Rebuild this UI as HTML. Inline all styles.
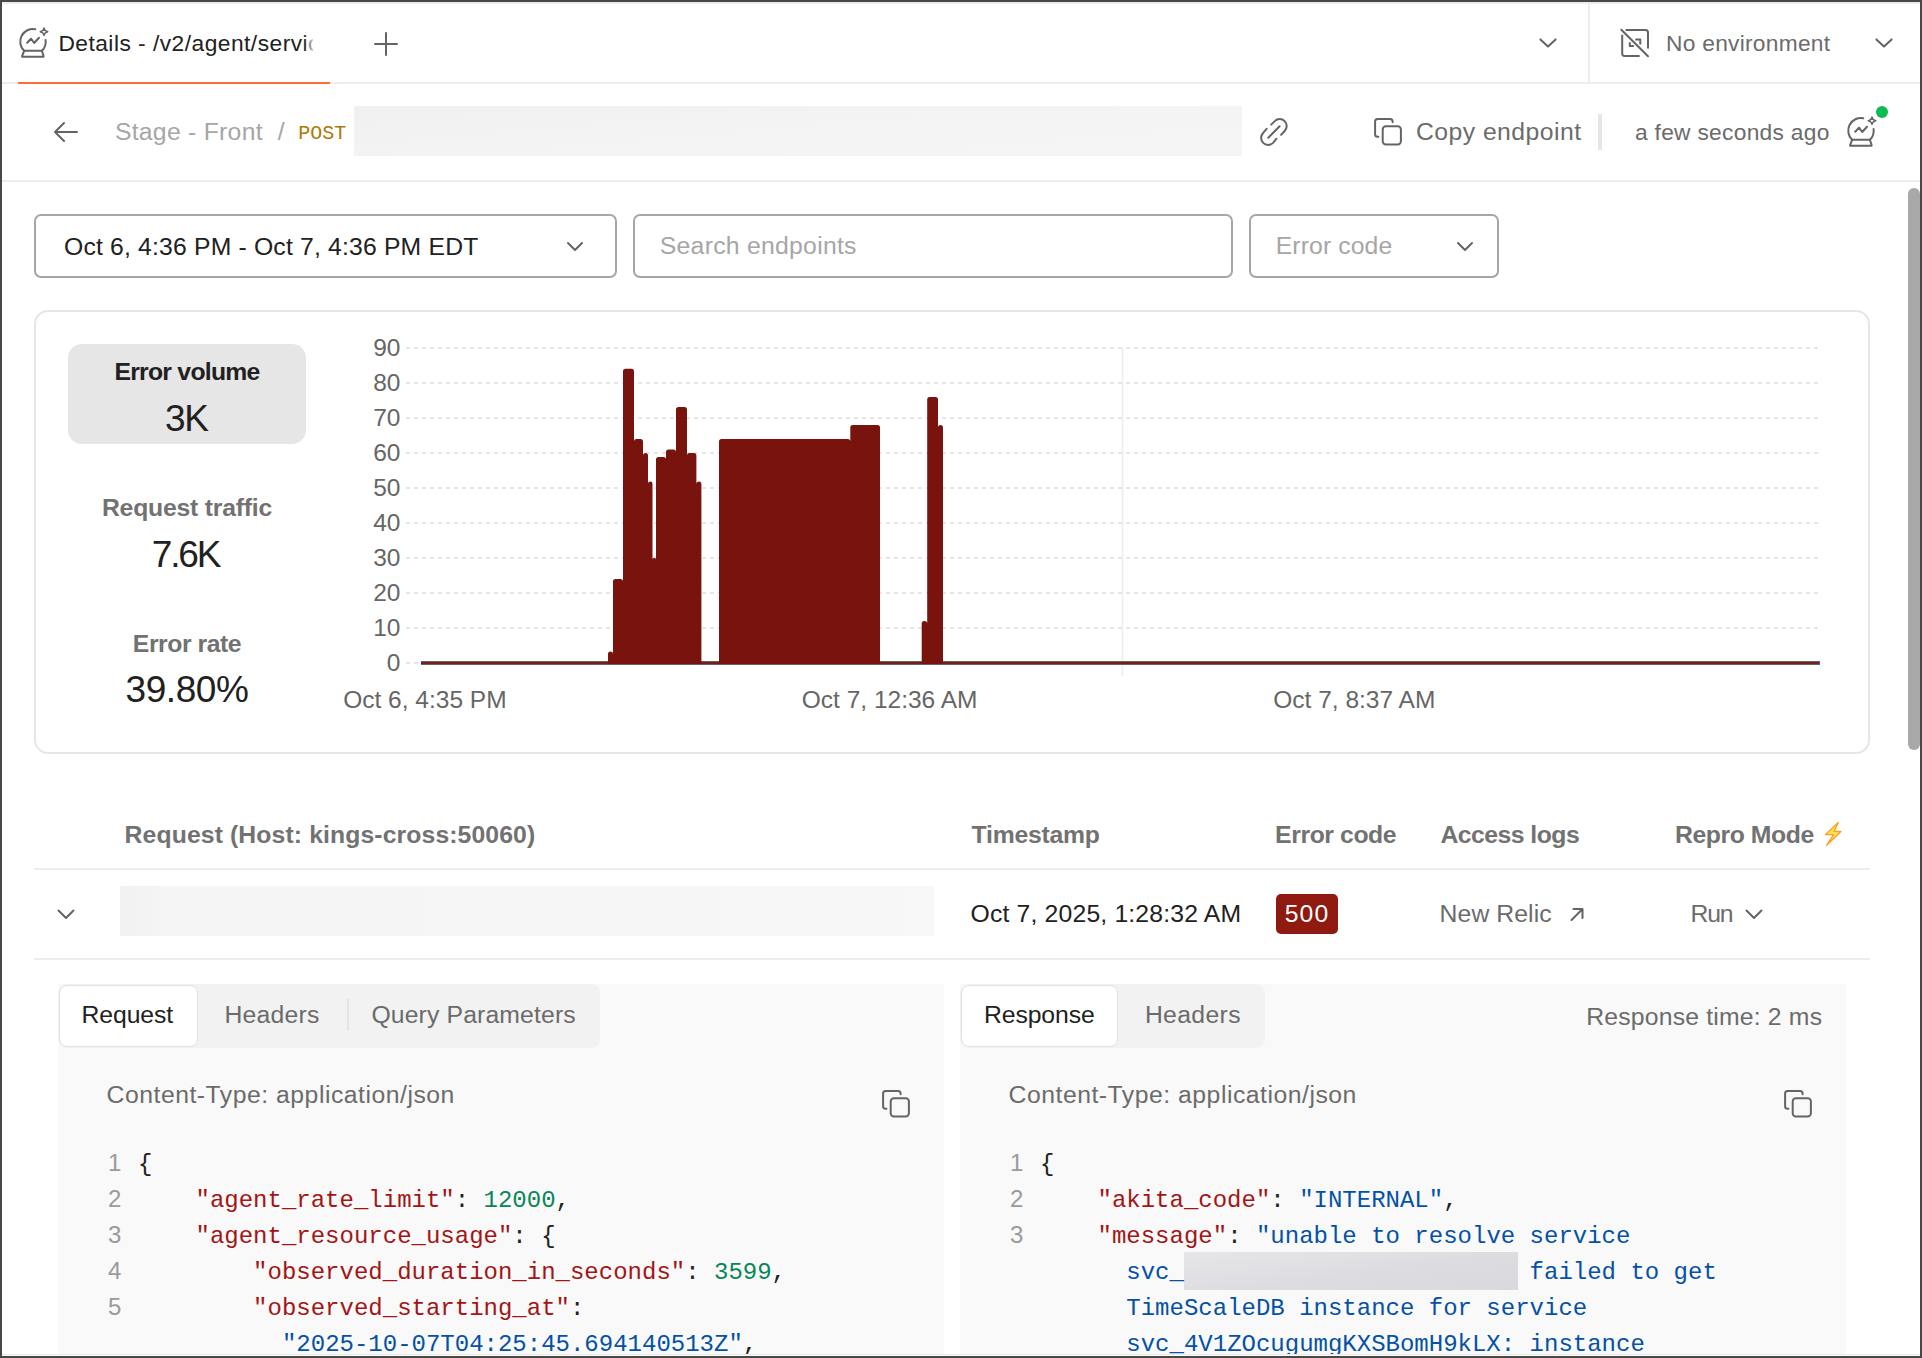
<!DOCTYPE html>
<html lang="en">
<head>
<meta charset="utf-8">
<title>Details - /v2/agent/service</title>
<style>
*{box-sizing:border-box;margin:0;padding:0}
html,body{width:1922px;height:1358px;overflow:hidden;background:#fff}
body{position:relative;font-family:"Liberation Sans",Arial,sans-serif;color:#212121}
.a{position:absolute}
.t{position:absolute;white-space:nowrap;line-height:40px;height:40px;font-size:24.75px}
.m{font-family:"Liberation Mono","DejaVu Sans Mono",monospace}
.g{color:#6b6b6b}
.lg{color:#a6a6a6}
.b{font-weight:bold}
.b.g{color:#727272}
.hl{position:absolute;background:#ededed;height:2px}
svg{position:absolute;overflow:visible}
.ic{fill:none;stroke:#646464;stroke-width:2;stroke-linecap:round;stroke-linejoin:round}
.box{position:absolute;border:2px solid #a6a6a6;border-radius:7px;background:#fff}
.ctr{text-align:center}
/* code */
.ln{position:absolute;white-space:pre;font-family:"Liberation Mono","DejaVu Sans Mono",monospace;font-size:24px;line-height:36px;height:36px}
.k{color:#a31515}.n{color:#098658}.s{color:#0451a5}.p{color:#212121}.num{color:#9a9a9a;font-family:"Liberation Sans",Arial,sans-serif;width:14.4px;text-align:center;margin-left:-0.4px;margin-top:-2px}
</style>
</head>
<body>
<!-- window frame -->
<div class="a" style="left:0;top:0;width:1922px;height:1358px;border:2px solid #484848;z-index:50;pointer-events:none"></div>

<div class="a" style="left:2px;top:1354px;width:1918px;height:1px;background:#ebebeb;z-index:40"></div>
<div class="a" style="left:2px;top:1355px;width:1918px;height:1px;background:#fdfdfd;z-index:40"></div>
<!-- ===== tab bar ===== -->
<div class="hl" style="left:2px;top:2px;width:1918px;background:#ececec"></div>
<div class="hl" style="left:2px;top:82px;width:1918px"></div>
<div class="a" style="left:18px;top:82px;width:312px;height:2px;background:#ff6c37"></div>
<div class="a" style="left:1588px;top:4px;width:2px;height:78px;background:#ededed"></div>
<svg id="tabicon" style="left:16px;top:24px" width="36" height="36" viewBox="16 24 36 36"><g class="ic">
<path d="M35.3 29.2A12.7 12.7 0 0 0 24.1 50.8H41.9A12.7 12.7 0 0 0 45.6 40.1"/>
<path d="M24.1 50.8L22.1 56.1Q21.9 56.7 22.6 56.7H43.1Q43.8 56.7 43.6 56.1L41.9 50.8"/>
<path d="M27.2 42.7L31 38.7L34.2 43L39 37.8"/>
<path d="M44 27.9Q44.5 31.2 47.8 31.7Q44.5 32.2 44 35.5Q43.5 32.2 40.2 31.7Q43.5 31.2 44 27.9Z" style="stroke-width:1.4"/>
</g></svg>
<div class="t" id="tabtitle" style="left:58.4px;top:22.9px;width:254.8px;overflow:hidden;font-size:22.75px;letter-spacing:.48px">Details - /v2/agent/service</div>
<div class="a" style="left:304px;top:24px;width:10px;height:40px;background:linear-gradient(90deg,rgba(255,255,255,0),rgba(255,255,255,.85))"></div>
<svg style="left:373px;top:31px" width="26" height="26" viewBox="0 0 26 26"><path class="ic" d="M13 2V24M2 13H24"/></svg>
<svg style="left:1538px;top:37px" width="20" height="12" viewBox="0 0 20 12"><path class="ic" d="M2.4 2.4L10 9.6L17.6 2.4"/></svg>
<svg id="envicon" style="left:1616px;top:24px" width="38" height="38" viewBox="1616 24 38 38"><g class="ic" style="stroke-linecap:butt">
<path d="M1625.6 30H1645.5Q1648 30 1648 32.5V48.6"/>
<path d="M1622.2 34.7V53.4Q1622.2 55.9 1624.7 55.9H1639.7"/>
<path d="M1635.3 39.6H1640.3V44.5M1629.8 42.2V46.1H1633.8"/>
<path d="M1621.3 29.7L1648 56.3" style="stroke-linecap:round"/>
</g></svg>
<div class="t g" id="noenv" style="left:1666.0px;top:23.1px;font-size:22.75px;letter-spacing:0.27px">No environment</div>
<svg style="left:1874px;top:37px" width="20" height="12" viewBox="0 0 20 12"><path class="ic" d="M2.4 2.4L10 9.6L17.6 2.4"/></svg>

<!-- ===== breadcrumb bar ===== -->
<div class="hl" style="left:2px;top:180px;width:1918px"></div>
<svg style="left:53px;top:121px" width="26" height="22" viewBox="0 0 26 22"><path class="ic" d="M24 11H2M11 2L2 11L11 20"/></svg>
<div class="t lg" id="stage" style="left:114.9px;top:112.1px;font-size:24.75px;letter-spacing:0.27px">Stage - Front</div>
<div class="t lg" id="slash" style="left:277.8px;top:112.3px;font-size:24.75px">/</div>
<div class="t m" id="post" style="left:298.2px;top:113.7px;font-size:20px;color:#ad7a03;letter-spacing:0.00px">POST</div>
<div class="a" style="left:354px;top:106px;width:888px;height:50px;background:linear-gradient(175deg,#f0f0f0,#f4f4f4 55%,#f5f5f5)"></div>
<svg id="linkicon" style="left:1256px;top:114px" width="36" height="36" viewBox="1256 114 36 36"><g class="ic" stroke-width="2.1">
<path d="M1271.2 124.6L1274.75 121.15A7 7 0 0 1 1284.65 131.05L1281.1 134.85"/>
<path d="M1266.6 128.85L1263.15 132.95A7 7 0 0 0 1273.05 142.85L1276.5 138.7"/>
<path d="M1268.3 137.7L1279.6 126.2"/>
</g></svg>
<svg id="copy1" style="left:1374px;top:118.2px" width="28" height="28" viewBox="0 0 28 28"><g class="ic" stroke-width="2.1"><rect x="8.7" y="8.3" width="18.2" height="18.2" rx="3.2"/><path d="M18.6 4.2V3.6Q18.6 1.1 16.1 1.1H3.6Q1.1 1.1 1.1 3.6V16.3Q1.1 18.8 3.6 18.8H4.4"/></g></svg>
<div class="t g" id="copyep" style="left:1416.0px;top:112.1px;font-size:24.75px;letter-spacing:0.45px">Copy endpoint</div>
<div class="a" style="left:1598px;top:114px;width:4px;height:36px;background:#e6e6e6"></div>
<div class="t g" id="ago" style="left:1635.0px;top:111.8px;font-size:22.75px;letter-spacing:0.29px">a few seconds ago</div>
<svg id="ballicon" style="left:1843.9px;top:112.9px" width="36" height="36" viewBox="16 24 36 36"><g class="ic">
<path d="M35.3 29.2A12.7 12.7 0 0 0 24.1 50.8H41.9A12.7 12.7 0 0 0 45.6 40.1"/>
<path d="M24.1 50.8L22.1 56.1Q21.9 56.7 22.6 56.7H43.1Q43.8 56.7 43.6 56.1L41.9 50.8"/>
<path d="M27.2 42.7L31 38.7L34.2 43L39 37.8"/>
<path d="M44 27.9Q44.5 31.2 47.8 31.7Q44.5 32.2 44 35.5Q43.5 32.2 40.2 31.7Q43.5 31.2 44 27.9Z" style="stroke-width:1.4"/>
</g></svg>
<div class="a" style="left:1876px;top:106px;width:12px;height:12px;border-radius:6px;background:#0cbb52"></div>

<!-- scrollbar -->
<div class="a" style="left:1908px;top:188px;width:12px;height:562px;border-radius:6px;background:#a8a8a8"></div>

<!-- ===== filter row ===== -->
<div class="box" style="left:34px;top:214px;width:583px;height:64px"></div>
<div class="t" id="daterange" style="left:64.0px;top:227.1px;font-size:24.75px;letter-spacing:0.17px">Oct 6, 4:36 PM - Oct 7, 4:36 PM EDT</div>
<svg style="left:566px;top:241px" width="18" height="11" viewBox="0 0 18 11"><path class="ic" d="M2 2L9 9L16 2"/></svg>
<div class="box" style="left:633px;top:214px;width:600px;height:64px"></div>
<div class="t lg" id="search" style="left:659.8px;top:225.9px;font-size:24.75px;letter-spacing:0.27px">Search endpoints</div>
<div class="box" style="left:1249px;top:214px;width:250px;height:64px"></div>
<div class="t lg" id="errcodesel" style="left:1275.7px;top:225.9px;font-size:24.75px;letter-spacing:0.11px">Error code</div>
<svg style="left:1456px;top:241px" width="18" height="11" viewBox="0 0 18 11"><path class="ic" d="M2 2L9 9L16 2"/></svg>

<!-- ===== summary card ===== -->
<div class="a" style="left:34px;top:310px;width:1836px;height:444px;border:2px solid #e6e6e6;border-radius:14px"></div>
<div class="a" style="left:68px;top:344px;width:238px;height:100px;border-radius:14px;background:#e6e6e6"></div>
<div class="t b ctr" style="left:68px;width:238px;top:352px;font-size:24.75px;letter-spacing:-0.74px"><span id="ev">Error volume</span></div>
<div class="t ctr" style="left:67.4px;width:238px;top:394px;font-size:37px;line-height:50px;height:50px;letter-spacing:-1.2px"><span id="evv">3K</span></div>
<div class="t b g ctr" style="left:68px;width:238px;top:488px;font-size:24.75px;letter-spacing:-0.21px"><span id="rt">Request traffic</span></div>
<div class="t ctr" style="left:66.5px;width:238px;top:530px;font-size:37px;line-height:50px;height:50px;letter-spacing:-2.2px"><span id="rtv">7.6K</span></div>
<div class="t b g ctr" style="left:68px;width:238px;top:624px;font-size:24.75px;letter-spacing:-0.45px"><span id="er">Error rate</span></div>
<div class="t ctr" style="left:68px;width:238px;top:665px;font-size:37px;line-height:50px;height:50px;letter-spacing:-0.42px"><span id="erv">39.80%</span></div>
<svg id="chart" style="left:0;top:0" width="1922" height="760" viewBox="0 0 1922 760">
<g fill="none" stroke="#e6e6e6" stroke-width="2" stroke-dasharray="4 4"><path d="M406 348H1818"/><path d="M406 383H1818"/><path d="M406 418H1818"/><path d="M406 453H1818"/><path d="M406 488H1818"/><path d="M406 523H1818"/><path d="M406 558H1818"/><path d="M406 593H1818"/><path d="M406 628H1818"/><path d="M406 663H1818"/></g>
<path d="M1122.5 348V676" stroke="#ececec" stroke-width="1.5" fill="none"/>
<rect x="421" y="661" width="1399" height="4" fill="#646464"/>
<rect x="421" y="662.1" width="1398" height="1.8" fill="#7b1711"/>
<path d="M608.0 664V654.1Q608.0 651.6 610.5 651.6H610.5Q613.0 651.6 613.0 654.1V664ZM613.0 664V581.5Q613.0 579.0 615.5 579.0H620.5Q623.0 579.0 623.0 581.5V664ZM623.0 664V371.3Q623.0 368.8 625.5 368.8H631.5Q634.0 368.8 634.0 371.3V664ZM634.0 664V441.4Q634.0 438.9 636.5 438.9H640.5Q643.0 438.9 643.0 441.4V664ZM643.0 664V455.5Q643.0 453.0 645.5 453.0H645.5Q648.0 453.0 648.0 455.5V664ZM648.0 664V483.6Q648.0 481.4 650.2 481.4H650.2Q652.5 481.4 652.5 483.6V664ZM652.5 664V559.5Q652.5 557.8 654.2 557.8H654.2Q656.0 557.8 656.0 559.5V664ZM656.0 664V459.5Q656.0 457.0 658.5 457.0H663.5Q666.0 457.0 666.0 459.5V664ZM666.0 664V451.9Q666.0 449.4 668.5 449.4H673.5Q676.0 449.4 676.0 451.9V664ZM676.0 664V409.5Q676.0 407.0 678.5 407.0H684.5Q687.0 407.0 687.0 409.5V664ZM687.0 664V455.5Q687.0 453.0 689.5 453.0H693.9Q696.4 453.0 696.4 455.5V664ZM696.4 664V483.9Q696.4 481.4 698.9 481.4H698.9Q701.4 481.4 701.4 483.9V664ZM719.0 664V441.4Q719.0 438.9 721.5 438.9H847.8Q850.3 438.9 850.3 441.4V664ZM850.3 664V427.5Q850.3 425.0 852.8 425.0H877.5Q880.0 425.0 880.0 427.5V664ZM921.7 664V623.4Q921.7 620.9 924.2 620.9H924.7Q927.2 620.9 927.2 623.4V664ZM927.2 664V399.5Q927.2 397.0 929.7 397.0H935.5Q938.0 397.0 938.0 399.5V664ZM938.0 664V427.5Q938.0 425.0 940.5 425.0H940.5Q943.0 425.0 943.0 427.5V664Z" fill="#78130d"/>
<g font-family="Liberation Sans, Arial, sans-serif" font-size="24.5" fill="#666"><text x="400.5" y="355.6" text-anchor="end">90</text><text x="400.5" y="390.6" text-anchor="end">80</text><text x="400.5" y="425.6" text-anchor="end">70</text><text x="400.5" y="460.6" text-anchor="end">60</text><text x="400.5" y="495.6" text-anchor="end">50</text><text x="400.5" y="530.6" text-anchor="end">40</text><text x="400.5" y="565.6" text-anchor="end">30</text><text x="400.5" y="600.6" text-anchor="end">20</text><text x="400.5" y="635.6" text-anchor="end">10</text><text x="400.5" y="670.6" text-anchor="end">0</text>
<text x="424.9" y="707.5" text-anchor="middle">Oct 6, 4:35 PM</text>
<text x="889.6" y="707.5" text-anchor="middle">Oct 7, 12:36 AM</text>
<text x="1354.3" y="707.5" text-anchor="middle">Oct 7, 8:37 AM</text>
</g>
</svg>
<!--CARD_END-->
<!-- ===== request table ===== -->
<div class="t b g" id="h1" style="left:124.6px;top:815.4px;font-size:24.75px;letter-spacing:0.11px">Request (Host: kings-cross:50060)</div>
<div class="t b g" id="h2" style="left:971.6px;top:815.4px;font-size:24.75px;letter-spacing:-0.23px">Timestamp</div>
<div class="t b g" id="h3" style="left:1275.1px;top:815.4px;font-size:24.75px;letter-spacing:-0.41px">Error code</div>
<div class="t b g" id="h4" style="left:1440.5px;top:815.4px;font-size:24.75px;letter-spacing:-0.53px">Access logs</div>
<div class="t b g" id="h5" style="left:1675.0px;top:815.4px;font-size:24.75px;letter-spacing:-0.42px">Repro Mode</div>
<svg id="bolt" style="left:1820px;top:818px" width="26" height="32" viewBox="1820 818 26 32"><path d="M1838.2 822.4L1825.4 834.6H1833.7L1826.4 845.5L1840.9 831.5H1834.1Z" fill="#ffe45c" stroke="#ff9d1e" stroke-width="1.3" stroke-linejoin="round"/></svg>
<div class="hl" style="left:34px;top:868px;width:1836px"></div>
<svg style="left:57px;top:909px" width="18" height="11" viewBox="0 0 18 11"><path class="ic" d="M1.5 1.5L9 9L16.5 1.5"/></svg>
<div class="a" style="left:120px;top:886px;width:814px;height:50px;background:linear-gradient(90deg,#f1f1f1 0%,#f5f5f5 6%,#f6f6f6 60%,#f8f8f8 100%)"></div>
<div class="t" id="ts" style="left:970.6px;top:894.1px;font-size:24.75px;letter-spacing:0.16px">Oct 7, 2025, 1:28:32 AM</div>
<div class="a" style="left:1276px;top:894px;width:62px;height:40px;border-radius:5px;background:#8e1a10"></div>
<div class="t" style="left:1276px;width:62px;text-align:center;top:894px;font-size:24.75px;color:#fff;letter-spacing:1.1px"><span id="b500">500</span></div>
<div class="t g" id="nr" style="left:1439.6px;top:894.1px;font-size:24.75px;letter-spacing:0.08px">New Relic</div>
<svg style="left:1569px;top:907px" width="16" height="15" viewBox="0 0 16 15"><path class="ic" d="M2.5 13L13.5 2M4.5 2H13.5V11"/></svg>
<div class="t g" id="run" style="left:1690.6px;top:894.1px;font-size:24.75px;letter-spacing:-1.25px">Run</div>
<svg style="left:1745px;top:909px" width="18" height="11" viewBox="0 0 18 11"><path class="ic" d="M1.5 1.5L9 9L16.5 1.5"/></svg>
<div class="hl" style="left:34px;top:958px;width:1836px"></div>

<!-- ===== request / response panels ===== -->
<div class="a" style="left:58px;top:984px;width:886px;height:380px;background:#f9f9f9"></div>
<div class="a" style="left:960px;top:984px;width:886px;height:380px;background:#f9f9f9"></div>
<div class="a" style="left:58px;top:984px;width:542px;height:64px;border-radius:9px;background:#f2f2f2"></div>
<div class="a" style="left:59px;top:985px;width:139px;height:62px;border-radius:8px;background:#fff;border:1px solid #e2e2e2"></div>
<div class="t" id="tq" style="left:81.6px;top:995.4px;font-size:24.75px;letter-spacing:-0.11px">Request</div>
<div class="t g" id="th" style="left:224.5px;top:995.4px;font-size:24.75px;letter-spacing:0.23px">Headers</div>
<div class="a" style="left:347px;top:999px;width:2px;height:32px;background:#e4e4e4"></div>
<div class="t g" id="tp" style="left:371.4px;top:995.4px;font-size:24.75px;letter-spacing:0.14px">Query Parameters</div>
<div class="a" style="left:960px;top:984px;width:305px;height:64px;border-radius:9px;background:#f2f2f2"></div>
<div class="a" style="left:961px;top:985px;width:157px;height:62px;border-radius:8px;background:#fff;border:1px solid #e2e2e2"></div>
<div class="t" id="tr" style="left:984.0px;top:995.4px;font-size:24.75px;letter-spacing:-0.11px">Response</div>
<div class="t g" id="th2" style="left:1144.9px;top:995.4px;font-size:24.75px;letter-spacing:0.35px">Headers</div>
<div class="t g" id="rtime" style="left:1586.3px;top:997.4px;font-size:24.75px;letter-spacing:0.18px">Response time: 2 ms</div>
<div class="t g" id="ct1" style="left:106.6px;top:1074.9px;font-size:24.75px;letter-spacing:0.51px">Content-Type: application/json</div>
<div class="t g" id="ct2" style="left:1008.6px;top:1074.9px;font-size:24.75px;letter-spacing:0.51px">Content-Type: application/json</div>
<svg id="copy2" style="left:882.2px;top:1090.2px" width="28" height="28" viewBox="0 0 28 28"><g class="ic" stroke-width="2.1"><rect x="8.7" y="8.3" width="18.2" height="18.2" rx="3.2"/><path d="M18.6 4.2V3.6Q18.6 1.1 16.1 1.1H3.6Q1.1 1.1 1.1 3.6V16.3Q1.1 18.8 3.6 18.8H4.4"/></g></svg>
<svg id="copy3" style="left:1784.2px;top:1090.2px" width="28" height="28" viewBox="0 0 28 28"><g class="ic" stroke-width="2.1"><rect x="8.7" y="8.3" width="18.2" height="18.2" rx="3.2"/><path d="M18.6 4.2V3.6Q18.6 1.1 16.1 1.1H3.6Q1.1 1.1 1.1 3.6V16.3Q1.1 18.8 3.6 18.8H4.4"/></g></svg>
<div class="a" style="left:1184px;top:1252px;width:334px;height:38px;background:linear-gradient(172deg,#e6e6e9,#dddde1 55%,#d9d9dd)"></div>
<div class="ln num" style="left:107.8px;top:1147px">1</div><div class="ln" style="left:137.9px;top:1147px"><span class="p">{</span></div>
<div class="ln num" style="left:107.8px;top:1183px">2</div><div class="ln" style="left:137.9px;top:1183px">    <span class="k">"agent_rate_limit"</span><span class="p">: </span><span class="n">12000</span><span class="p">,</span></div>
<div class="ln num" style="left:107.8px;top:1219px">3</div><div class="ln" style="left:137.9px;top:1219px">    <span class="k">"agent_resource_usage"</span><span class="p">: {</span></div>
<div class="ln num" style="left:107.8px;top:1255px">4</div><div class="ln" style="left:137.9px;top:1255px">        <span class="k">"observed_duration_in_seconds"</span><span class="p">: </span><span class="n">3599</span><span class="p">,</span></div>
<div class="ln num" style="left:107.8px;top:1291px">5</div><div class="ln" style="left:137.9px;top:1291px">        <span class="k">"observed_starting_at"</span><span class="p">:</span></div>
<div class="ln" style="left:137.9px;top:1327px">          <span class="s">"2025-10-07T04:25:45.694140513Z"</span><span class="p">,</span></div>
<div class="ln num" style="left:1009.8px;top:1147px">1</div><div class="ln" style="left:1039.9px;top:1147px"><span class="p">{</span></div>
<div class="ln num" style="left:1009.8px;top:1183px">2</div><div class="ln" style="left:1039.9px;top:1183px">    <span class="k">"akita_code"</span><span class="p">: </span><span class="s">"INTERNAL"</span><span class="p">,</span></div>
<div class="ln num" style="left:1009.8px;top:1219px">3</div><div class="ln" style="left:1039.9px;top:1219px">    <span class="k">"message"</span><span class="p">: </span><span class="s">"unable to resolve service</span></div>
<div class="ln" style="left:1039.9px;top:1255px">      <span class="s">svc_</span>                        <span class="s">failed to get</span></div>
<div class="ln" style="left:1039.9px;top:1291px">      <span class="s">TimeScaleDB instance for service</span></div>
<div class="ln" style="left:1039.9px;top:1327px">      <span class="s">svc_4V1ZOcugumgKXSBomH9kLX: instance</span></div>

</body>
</html>
